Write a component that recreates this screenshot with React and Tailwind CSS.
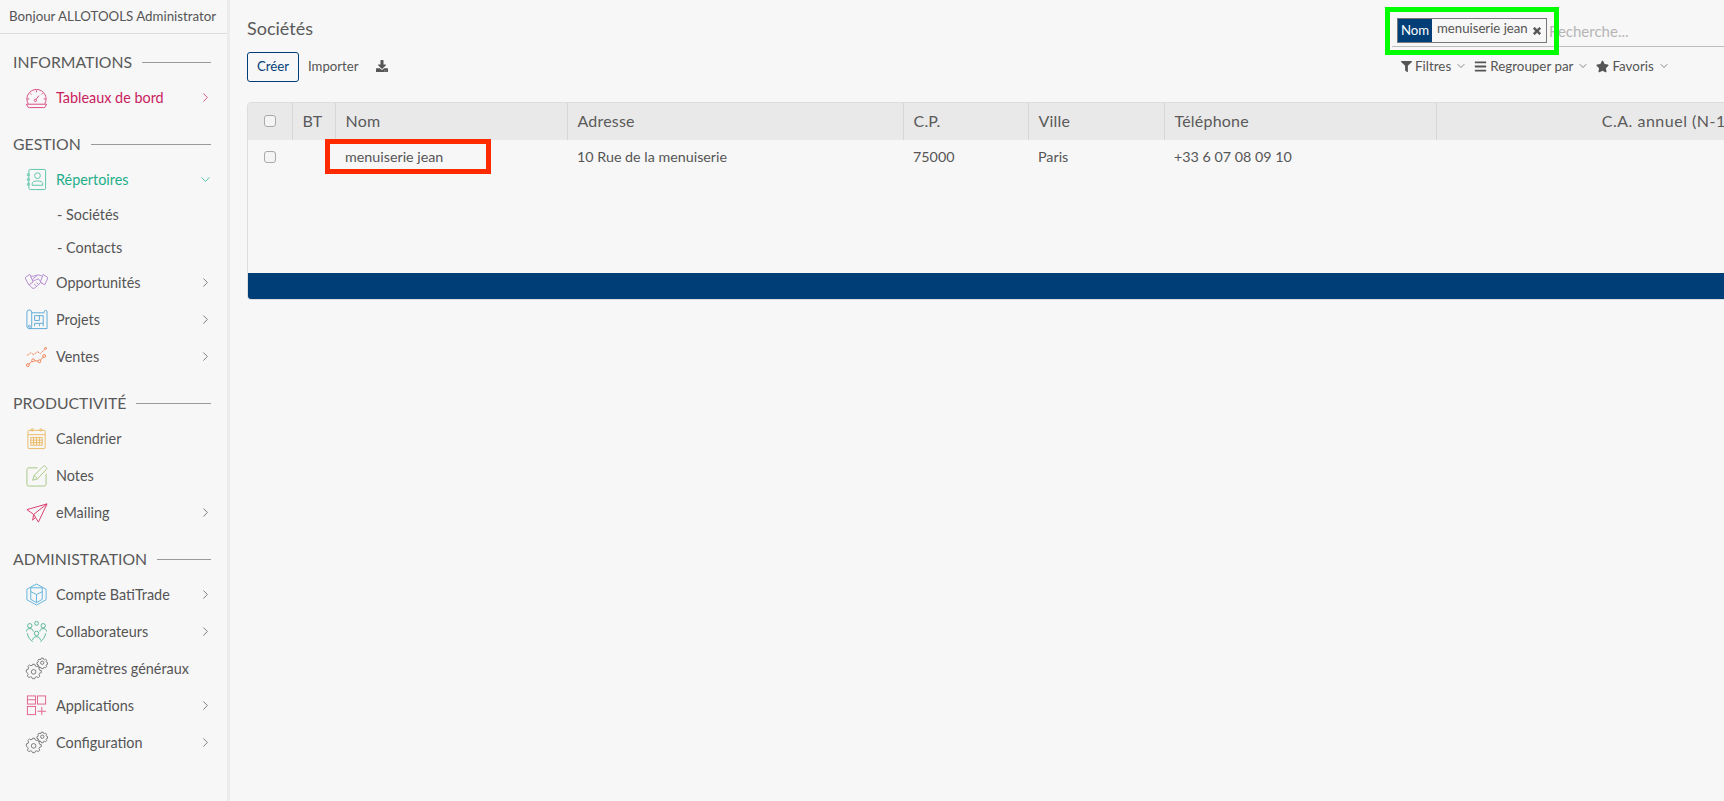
import { ChevronDown, ChevronRight } from 'lucide-react';
import { FaBars, FaDownload, FaFilter, FaStar, FaTimes } from 'react-icons/fa';

const Gears = () => (
  <>
    <circle cx="9" cy="15.5" r="2.4" />
    <path d="M7.8 9.6h2.4l.5 1.8 1.5.7 1.7-.9 1.6 1.7-.9 1.6.6 1.6 1.8.5v2.3l-1.8.5-.6 1.5.9 1.7-1.6 1.6-1.7-.9-1.5.6-.5 1.5H7.8l-.5-1.5-1.6-.6-1.6.9-1.7-1.6.9-1.7-.6-1.5L1.4 18v-2.3l1.8-.5.6-1.6-.9-1.6 1.7-1.7 1.6.9 1.6-.7z" transform="translate(0 -1.5) scale(1 .95)" />
    <circle cx="18" cy="6" r="1.7" />
    <path d="M17 1.2h2l.3 1.2 1 .4 1.1-.6 1.2 1.2-.6 1.1.4 1 1.1.3v1.9l-1.1.3-.4 1 .6 1.1-1.2 1.2-1.1-.6-1 .4-.3 1.1h-2l-.3-1.1-1-.4-1.1.6-1.2-1.2.6-1.1-.4-1-1.1-.3V5.8l1.1-.3.4-1-.6-1.1 1.2-1.2 1.1.6 1-.4z" />
  </>
);

// line icons from the menu, hand drawn on a 24 grid
const ICONS = {
  gauge: (
    <>
      <path d="M3.3 18.500a10 10 0 1 1 17.400 0" />
      <path d="M1.500 19h21l-1 2a2 2 0 0 1-2 1.500h-15a2 2 0 0 1-2-1.500z" />
      <path d="M12 4.500v2M5.500 7.500l1.300 1.300M18.500 7.500l-1.300 1.300M2.500 13.500h2M19.500 13.500h2" />
      <circle cx="10.800" cy="15" r="1.200" />
      <path d="M11.600 14l3-4" />
    </>
  ),
  book: (
    <>
      <rect x="4" y="1.500" width="17.500" height="21" rx="1.500" />
      <circle cx="13" cy="8" r="3" />
      <path d="M7.500 18v-1.500c0-2 2-3 5.500-3s5.500 1 5.500 3V18z" />
      <circle cx="3.500" cy="7" r="1.200" />
      <circle cx="3.500" cy="12" r="1.200" />
      <circle cx="3.500" cy="17" r="1.200" />
    </>
  ),
  hands: (
    <>
      <path d="M0 7l5-3.500 3.500 8L4 14.500zM24 7l-5-3.500-3 8 4.500 3z" />
      <path d="M6 5.500c3 .5 4.500-1 7-1.300 2-.2 3.500.6 5 1.300M16 12.500c-2 1.500-4.500 4.500-6.500 5.500-1.500.8-3-1-4-2.500L4 14" />
      <path d="M13 4.500L8.500 8c-1 1.500 1 2.500 2.500 1.500L14 8l4 5.500M12 16l-2.500-2.500M14.500 14.500L12 12" />
    </>
  ),
  plan: (
    <>
      <path d="M2 19V4.500a2.500 2.500 0 0 1 5 0V19a2.500 2.500 0 0 1-5 0z" />
      <path d="M7 5h13.500M20 4a1.500 1.500 0 0 1 3 0v17.500H4.500" />
      <path d="M10 8h9v11M10 8v5h5M15 8v5M10 16h5v3M10 16v3M15 16h4" />
      <circle cx="4.500" cy="19" r="1" />
    </>
  ),
  chart: (
    <>
      <path d="M2 11l4-3 3 2 4-3 3 2 5-5" strokeDasharray="2.500 .8" />
      <circle cx="21.500" cy="3.500" r="1" />
      <circle cx="3" cy="21" r="1.500" />
      <circle cx="8.500" cy="16" r="1.500" />
      <circle cx="15" cy="17" r="1.500" />
      <circle cx="20" cy="11.500" r="1.500" />
      <path d="M4 20l3.400-3M10 16.300l3.500.5M16 16l3-3.500" />
    </>
  ),
  calendar: (
    <>
      <rect x="3" y="3.500" width="18" height="19" rx="1" />
      <path d="M3 8h18" />
      <circle cx="7.500" cy="3" r="1.200" />
      <circle cx="16.500" cy="3" r="1.200" />
      <path d="M6 11h12v8H6zM9 11v8M12 11v8M15 11v8M6 13.700h12M6 16.300h12" />
    </>
  ),
  note: (
    <>
      <path d="M13 4H4a2 2 0 0 0-2 2v15a2 2 0 0 0 2 2h16a2 2 0 0 0 2-2V10" />
      <path d="M8 17l1.500-5L19 2.500a1.500 1.500 0 0 1 2.200 0l1 1a1.500 1.500 0 0 1 0 2.200L13 15.500zM9.500 12l3.500 3.500" />
    </>
  ),
  plane: (
    <>
      <path d="M2 9l21-6-9 19-5-8zM9 14L23 3M9 14l-1 6 3.500-3.500" />
    </>
  ),
  cube: (
    <>
      <path d="M12 1l10 5.500v11L12 23 2 17.500v-11z" />
      <path d="M6 5l12 0 0 12-6 3.500-6-3.500zM6 9l6 3 6-3M12 12v8.500" />
    </>
  ),
  people: (
    <>
      <circle cx="5" cy="6" r="2.300" />
      <circle cx="12" cy="3.500" r="2" />
      <circle cx="19" cy="6" r="2.300" />
      <circle cx="12" cy="14" r="2.300" />
      <path d="M1.500 12c0-2 1.500-3 3.500-3s3.500 1 3.500 3M15.500 12c0-2 1.500-3 3.500-3s3.500 1 3.500 3M8 21c0-2 1.500-3.500 4-3.500s4 1.500 4 3.500" />
      <path d="M2.500 14c.5 4 3 7 5.500 8.500M21.500 14c-.5 4-3 7-5.500 8.500" />
    </>
  ),
  gears: <Gears />,
  apps: (
    <>
      <rect x="2.500" y="2" width="8.500" height="8.500" />
      <rect x="13" y="2" width="8.500" height="8.500" />
      <rect x="2.500" y="13" width="8.500" height="8.500" />
      <path d="M2.500 6h8.500M13 18h9M17.500 13.500v8.500" />
    </>
  ),
};

const SECTIONS = [
  {
    title: 'INFORMATIONS',
    items: [{ label: 'Tableaux de bord', icon: 'gauge', tone: 'text-[#c9215f]', iconTone: 'text-[#d9487f]', chevron: true }],
  },
  {
    title: 'GESTION',
    items: [
      {
        label: 'Répertoires',
        icon: 'book',
        tone: 'text-[#1fae8b]',
        iconTone: 'text-[#5cc4aa]',
        open: true,
        children: ['- Sociétés', '- Contacts'],
      },
      { label: 'Opportunités', icon: 'hands', iconTone: 'text-[#b48bd0]', chevron: true },
      { label: 'Projets', icon: 'plan', iconTone: 'text-[#5ba9d6]', chevron: true },
      { label: 'Ventes', icon: 'chart', iconTone: 'text-[#ee8150]', chevron: true },
    ],
  },
  {
    title: 'PRODUCTIVITÉ',
    items: [
      { label: 'Calendrier', icon: 'calendar', iconTone: 'text-[#eab964]' },
      { label: 'Notes', icon: 'note', iconTone: 'text-[#a5c585]' },
      { label: 'eMailing', icon: 'plane', iconTone: 'text-[#d93a6b]', chevron: true },
    ],
  },
  {
    title: 'ADMINISTRATION',
    items: [
      { label: 'Compte BatiTrade', icon: 'cube', iconTone: 'text-[#62b3de]', chevron: true },
      { label: 'Collaborateurs', icon: 'people', iconTone: 'text-[#55b393]', chevron: true },
      { label: 'Paramètres généraux', icon: 'gears', iconTone: 'text-[#777777]' },
      { label: 'Applications', icon: 'apps', iconTone: 'text-[#e2628f]', chevron: true },
      { label: 'Configuration', icon: 'gears', iconTone: 'text-[#777777]', chevron: true },
    ],
  },
];

const COLUMNS = [
  { label: '', width: 'w-[44px]', check: true },
  { label: 'BT', width: 'w-[43px]' },
  { label: 'Nom', width: 'w-[232px]', value: 'menuiserie jean' },
  { label: 'Adresse', width: 'w-[336px]', value: '10 Rue de la menuiserie' },
  { label: 'C.P.', width: 'w-[125px]', value: '75000' },
  { label: 'Ville', width: 'w-[136px]', value: 'Paris' },
  { label: 'Téléphone', width: 'w-[272px]', value: '+33 6 07 08 09 10' },
  { label: 'C.A. annuel (N-1)', width: 'w-[305px]', right: true },
];

function MenuIcon({ name, className }) {
  return (
    <svg viewBox="0 0 24 24" fill="none" stroke="currentColor" strokeWidth="1" className={`h-[23px] w-[23px] shrink-0 ${className}`}>
      {ICONS[name]}
    </svg>
  );
}

function MenuItem({ item }) {
  return (
    <>
      <div className="flex h-[37px] items-center pl-[25px] pr-[14px]">
        <MenuIcon name={item.icon} className={item.iconTone} />
        <span className={`ml-[8px] flex-1 whitespace-nowrap text-[14.4px] ${item.tone || 'text-[#555555]'}`}>{item.label}</span>
        {item.chevron && <ChevronRight size={15} strokeWidth={1.2} className={item.tone || 'text-[#555555]'} />}
        {item.open && <ChevronDown size={15} strokeWidth={1.2} className={item.tone} />}
      </div>
      {item.children?.map((child) => (
        <div key={child} className="flex h-[33px] items-center pl-[57px] text-[14.4px] text-[#555555]">
          {child}
        </div>
      ))}
    </>
  );
}

function Sidebar() {
  return (
    <aside className="w-[230px] shrink-0 border-r-[3px] border-[#ececec]">
      <div className="flex h-[34px] items-center whitespace-nowrap border-b border-[#dcdcdc] pl-[9px] text-[13.3px] text-[#555555]">
        Bonjour ALLOTOOLS Administrator
      </div>
      {SECTIONS.map((section) => (
        <section key={section.title} className="pt-4">
          <div className="mb-[5px] flex h-6 items-center gap-[10px] pl-[13px] pr-[16px]">
            <span className="text-[15.8px] text-[#5a5a5a]">{section.title}</span>
            <span className="h-px flex-1 bg-[#999999]" />
          </div>
          {section.items.map((item) => (
            <MenuItem key={item.label} item={item} />
          ))}
        </section>
      ))}
    </aside>
  );
}

function Checkbox() {
  return <span className="block h-[12px] w-[12px] rounded-[3px] border border-[#aaaaaa] bg-[#f4f4f4]" />;
}

function Toolbar() {
  return (
    <div className="flex h-[102px] justify-between">
      <div className="pt-[18px]">
        <h1 className="text-[18px] leading-[20px] text-[#5a5a5a]">Sociétés</h1>
        <div className="mt-[14px] flex items-center text-[13.2px]">
          <button className="h-[30px] w-[52px] rounded-[3px] border border-[#003e78] text-[#003e78]">Créer</button>
          <span className="ml-[9px] text-[#555555]">Importer</span>
          <FaDownload className="ml-[17px] -translate-y-px text-[12px] text-[#555555]" />
        </div>
      </div>
      <div className="w-[332px] pt-[18px]">
        <div className="flex h-[29px] items-start border-b border-[#bdbdbd] pl-[5px]">
          <div className="flex h-[25px] w-[150px] items-stretch border border-[#777777] text-[13.2px]">
            <span className="flex w-[34px] items-center justify-center bg-[#003e78] text-white">Nom</span>
            <span className="flex-1 whitespace-nowrap pl-[5px] leading-[19px] text-[#555555]">menuiserie jean</span>
            <FaTimes className="mr-[4px] mt-[7px] shrink-0 stroke-current stroke-[50] text-[10px] text-[#555555]" />
          </div>
          <span className="ml-[2px] mt-[2px] text-[15px] text-[#b5b5b5]">Recherche...</span>
        </div>
        <div className="mt-[9px] flex h-[20px] items-center pl-[9px] text-[13.4px] text-[#555555]">
          <FaFilter className="mr-[3px] text-[11px]" />
          Filtres
          <ChevronDown size={12} strokeWidth={1.4} className="ml-[4px] mr-[7px]" />
          <FaBars className="mr-[3px] text-[13px]" />
          Regrouper par
          <ChevronDown size={12} strokeWidth={1.4} className="ml-[4px] mr-[7px]" />
          <FaStar className="mr-[3px] text-[13px]" />
          Favoris
          <ChevronDown size={12} strokeWidth={1.4} className="ml-[4px]" />
        </div>
      </div>
    </div>
  );
}

function Table() {
  return (
    <div className="w-[1494px] overflow-hidden rounded-[4px] border border-[#dddddd]">
      <table className="w-full table-fixed border-collapse">
        <thead>
          <tr className="h-[37px] bg-[#e9e9e9] text-[16px] text-[#5a5a5a]">
            {COLUMNS.map((col, i) => (
              <th
                key={i}
                className={`${col.width} border-r border-[#d6d6d6] pb-[2px] font-normal ${col.right ? 'pl-[10px] pr-[10px] text-right tracking-[0.5px]' : 'px-[10px] text-left tracking-[0.2px]'}`}
              >
                {col.check ? <div className="ml-[6px] translate-y-0"><Checkbox /></div> : col.label}
              </th>
            ))}
          </tr>
        </thead>
        <tbody>
          <tr className="h-[33px] text-[14.3px] text-[#555555]">
            {COLUMNS.map((col, i) => (
              <td key={i} className="px-[10px]">
                {col.check ? <div className="ml-[6px]"><Checkbox /></div> : col.value}
              </td>
            ))}
          </tr>
          <tr className="h-[100px]">
            <td colSpan={COLUMNS.length} />
          </tr>
        </tbody>
      </table>
      <div className="h-[26px] bg-[#003e78]" />
    </div>
  );
}

export default function App() {
  return (
    <div className="relative flex h-[801px] overflow-hidden bg-[#f7f7f7] font-['Lato',sans-serif]">
      <Sidebar />
      <main className="min-w-0 flex-1 pl-[17px]">
        <Toolbar />
        <Table />
      </main>
      {/* annotation frames drawn on top of the capture */}
      <div className="pointer-events-none absolute left-[1385px] top-[7px] h-[48px] w-[174px] border-[5px] border-[#00ff00]" />
      <div className="pointer-events-none absolute left-[325px] top-[139px] h-[35px] w-[166px] border-[5px] border-[#ff2a00]" />
    </div>
  );
}
